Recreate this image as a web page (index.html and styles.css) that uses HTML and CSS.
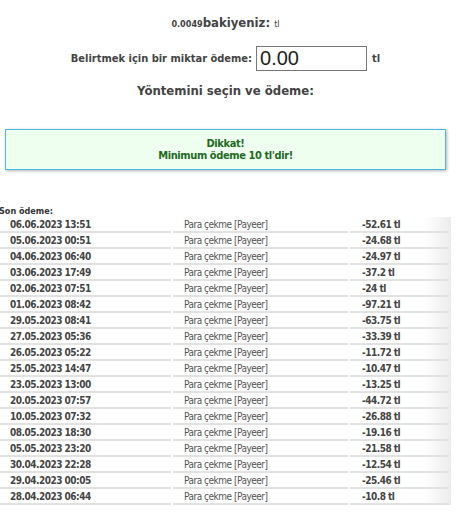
FILE: index.html
```html
<!DOCTYPE html>
<html lang="tr">
<head>
    <meta charset="UTF-8">
    <meta name="viewport" content="width=device-width, initial-scale=1.0">
    <title>Ödeme</title>
    <link rel="stylesheet" href="styles.css">
</head>
<body>
    <div class="wrap">
        <div class="balance"><span class="sum">0.0049</span>bakiyeniz: <span class="cur">tl</span></div>

        <form class="pay" action="#">
            <label class="pay-label">Belirtmek için bir miktar ödeme:</label>
            <input class="pay-input" type="text" value="0.00">
            <span class="pay-cur">tl</span>
        </form>

        <div class="method">Yöntemini seçin ve ödeme:</div>

        <div class="notice">
            Dikkat!<br>
            Minimum ödeme 10 tl'dir!
        </div>
    </div>

    <div class="last-title">Son ödeme:</div>
    <table class="history">
        <tr><td class="d">06.06.2023 13:51</td><td class="t">Para çekme [Payeer]</td><td class="s">-52.61 tl</td></tr>
        <tr><td class="d">05.06.2023 00:51</td><td class="t">Para çekme [Payeer]</td><td class="s">-24.68 tl</td></tr>
        <tr><td class="d">04.06.2023 06:40</td><td class="t">Para çekme [Payeer]</td><td class="s">-24.97 tl</td></tr>
        <tr><td class="d">03.06.2023 17:49</td><td class="t">Para çekme [Payeer]</td><td class="s">-37.2 tl</td></tr>
        <tr><td class="d">02.06.2023 07:51</td><td class="t">Para çekme [Payeer]</td><td class="s">-24 tl</td></tr>
        <tr><td class="d">01.06.2023 08:42</td><td class="t">Para çekme [Payeer]</td><td class="s">-97.21 tl</td></tr>
        <tr><td class="d">29.05.2023 08:41</td><td class="t">Para çekme [Payeer]</td><td class="s">-63.75 tl</td></tr>
        <tr><td class="d">27.05.2023 05:36</td><td class="t">Para çekme [Payeer]</td><td class="s">-33.39 tl</td></tr>
        <tr><td class="d">26.05.2023 05:22</td><td class="t">Para çekme [Payeer]</td><td class="s">-11.72 tl</td></tr>
        <tr><td class="d">25.05.2023 14:47</td><td class="t">Para çekme [Payeer]</td><td class="s">-10.47 tl</td></tr>
        <tr><td class="d">23.05.2023 13:00</td><td class="t">Para çekme [Payeer]</td><td class="s">-13.25 tl</td></tr>
        <tr><td class="d">20.05.2023 07:57</td><td class="t">Para çekme [Payeer]</td><td class="s">-44.72 tl</td></tr>
        <tr><td class="d">10.05.2023 07:32</td><td class="t">Para çekme [Payeer]</td><td class="s">-26.88 tl</td></tr>
        <tr><td class="d">08.05.2023 18:30</td><td class="t">Para çekme [Payeer]</td><td class="s">-19.16 tl</td></tr>
        <tr><td class="d">05.05.2023 23:20</td><td class="t">Para çekme [Payeer]</td><td class="s">-21.58 tl</td></tr>
        <tr><td class="d">30.04.2023 22:28</td><td class="t">Para çekme [Payeer]</td><td class="s">-12.54 tl</td></tr>
        <tr><td class="d">29.04.2023 00:05</td><td class="t">Para çekme [Payeer]</td><td class="s">-25.46 tl</td></tr>
        <tr><td class="d">28.04.2023 06:44</td><td class="t">Para çekme [Payeer]</td><td class="s">-10.8 tl</td></tr>
    </table>
</body>
</html>
```

FILE: styles.css
```css
* {margin: 0; padding: 0; box-sizing: border-box;}
body {background: #fff; color: #444; font-family: "DejaVu Sans Condensed", "DejaVu Sans", Tahoma, sans-serif;}

.wrap {width: 451px; text-align: center; padding-top: 15px;}

.balance {font-size: 13px; font-weight: bold; line-height: 16px;}
.balance .sum {font-size: 9px;}
.balance .cur {font-size: 9px; font-weight: normal;}

.pay {display: flex; justify-content: center; align-items: center; gap: 4px; margin-top: 14px;}
.pay-label {font-size: 11px; font-weight: bold;}
.pay-input {width: 111px; height: 25px; border: 1px solid #777; padding: 0 3px; font-family: "Liberation Sans", Arial, sans-serif; font-size: 20px; color: #222;}
.pay-cur {font-size: 11px; font-weight: bold; margin-left: 1px;}

.method {font-size: 13px; font-weight: bold; margin-top: 11px; line-height: 18px;}

.notice {margin: 29px 5px 0; height: 41px; padding-top: 8px; border: 1px solid #4ab9de; background: #efffef; box-shadow: 1px 1px 3px rgba(0, 0, 0, 0.3); color: #1f6a1f; font-size: 11px; font-weight: bold; line-height: 12px; letter-spacing: -0.4px;}

/* label is pushed slightly past the left edge */
.last-title {margin: 35px 0 0 -1px; font-size: 9px; font-weight: bold; line-height: 12px; color: #333;}

.history {width: 453px; border-spacing: 2px 0; margin-left: -2px; background: linear-gradient(to right, rgba(0,0,0,0) 94%, #ececec 100%);}
.history td {height: 16px; border-bottom: 2px solid #e2e2e2; font-size: 10px; line-height: 13px; letter-spacing: -0.5px; vertical-align: middle;}
.history td.d {width: 171px; padding-left: 10px; font-weight: bold;}
.history td.t {width: 175px; padding-left: 11px; color: #555;}
.history td.s {padding-left: 12px; font-weight: bold;}
```
